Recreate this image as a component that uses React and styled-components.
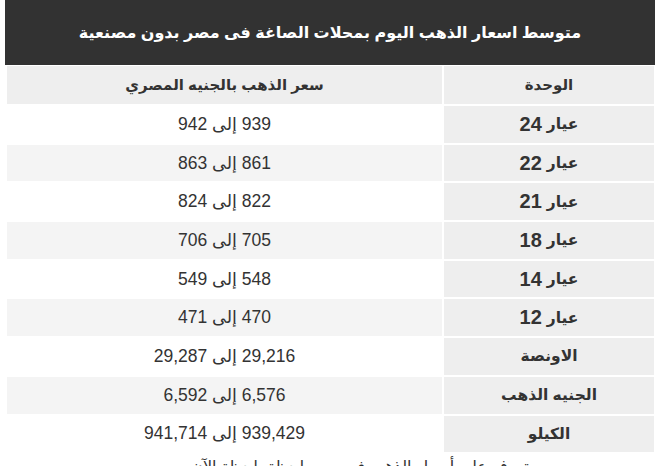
import React from 'react';
import styled, { createGlobalStyle } from 'styled-components';

const GlobalStyle = createGlobalStyle`
  body {
    margin: 0;
    background: #fff;
    font-family: "Liberation Sans", "DejaVu Sans", Arial, sans-serif;
    color: #333;
  }
`;

const Page = styled.div`
  direction: rtl;
  width: 650px;
  padding-left: 5px;
`;

const Title = styled.h2`
  margin: 0;
  height: 65px;
  display: flex;
  align-items: center;
  justify-content: center;
  background-color: #323232;
  color: #fff;
  font-size: 16px;
  font-weight: 700;
`;

const Grid = styled.div`
  display: grid;
  grid-template-columns: 210px 435px;
  gap: 2px;
  padding: 1px 1px 0 2px;
`;

const Cell = styled.div`
  display: flex;
  align-items: center;
  justify-content: center;
  height: ${({ head }) => (head ? '38px' : '36.7px')};
  background-color: ${({ bg }) => bg};
  font-size: ${({ head, bold }) => (head ? '15px' : bold ? '15.5px' : '17.5px')};
  font-weight: ${({ bold }) => (bold ? 700 : 400)};
  color: #333;
`;

const Num = styled.span`
  font-size: 20px;
  font-weight: 700;
  margin-right: 5px;
`;

const Note = styled.p`
  margin: 5px 0 0;
  text-align: center;
  font-size: 16px;
  padding-left: 60px;
`;

const karats = [
  ['24', '939 إلى 942'],
  ['22', '861 إلى 863'],
  ['21', '822 إلى 824'],
  ['18', '705 إلى 706'],
  ['14', '548 إلى 549'],
  ['12', '470 إلى 471'],
];

const others = [
  ['الاونصة', '29,216 إلى 29,287'],
  ['الجنيه الذهب', '6,576 إلى 6,592'],
  ['الكيلو', '939,429 إلى 941,714'],
];

const rowBg = (i) => (i % 2 === 0 ? '#fff' : '#f4f4f4');

export default function App() {
  return (
    <>
      <GlobalStyle />
      <Page>
        <Title>متوسط اسعار الذهب اليوم بمحلات الصاغة فى مصر بدون مصنعية</Title>
        <Grid>
          <Cell head bold bg="#eee">الوحدة</Cell>
          <Cell head bold bg="#eee">سعر الذهب بالجنيه المصري</Cell>
          {karats.map(([k, v], i) => (
            <React.Fragment key={k}>
              <Cell bold bg="#eee">
                عيار<Num>{k}</Num>
              </Cell>
              <Cell bg={rowBg(i)}>{v}</Cell>
            </React.Fragment>
          ))}
          {others.map(([k, v], i) => (
            <React.Fragment key={k}>
              <Cell bold bg="#eee">{k}</Cell>
              <Cell bg={rowBg(i + karats.length)}>{v}</Cell>
            </React.Fragment>
          ))}
        </Grid>
        <Note>تعرف على أسعار الذهب في مصر لحظة بلحظة الآن</Note>
      </Page>
    </>
  );
}
